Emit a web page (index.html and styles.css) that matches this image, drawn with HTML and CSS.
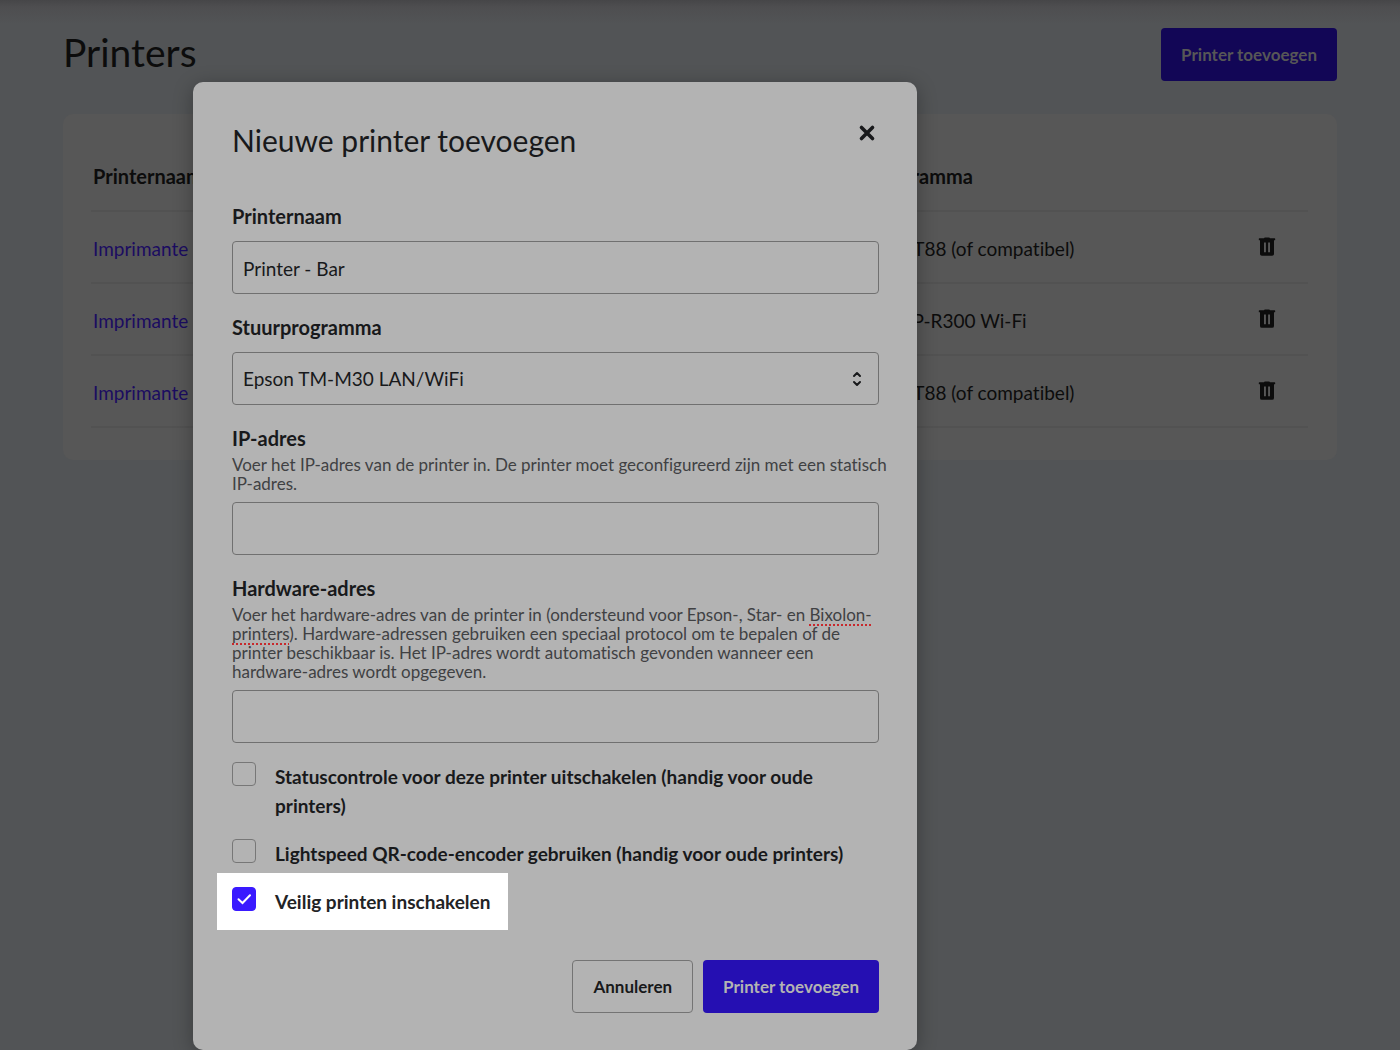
FILE: index.html
```html
<!DOCTYPE html>
<html lang="nl">
<head>
<meta charset="utf-8">
<meta name="viewport" content="width=device-width, initial-scale=1">
<title>Printers</title>
<link rel="stylesheet" href="styles.css">
</head>
<body>
<svg class="sprite" aria-hidden="true">
  <symbol id="trash" viewBox="0 0 18 20">
    <path fill="currentColor" fill-rule="evenodd" d="M6 1.2Q6.2.5 7 .5h4q.8 0 1 .7h4.600q.6 0 .6.7v.8q0 .6-.6.6H16v13.600q0 1.900-1.900 1.900H3.900Q2 18.800 2 16.900V3.300h-.6q-.6 0-.6-.6v-.8q0-.7.6-.7zM6 5.500v9.800h1.900V5.500zm4.100 0v9.800H12V5.500z"/>
  </symbol>
</svg>
<main class="page">
  <header class="page-header">
    <h1 class="page-title">Printers</h1>
    <button class="button button-dimmed" type="button">Printer toevoegen</button>
  </header>
  <section class="card">
    <table class="printers">
      <thead>
        <tr><th class="col-name" scope="col">Printernaam</th><th scope="col">Stuurprogramma</th><th class="col-action"></th></tr>
      </thead>
      <tbody>
        <tr><td><a class="printer-link" href="#">Imprimante</a></td><td>Epson TM-T88 (of compatibel)</td><td><button class="icon-button" type="button" aria-label="Verwijderen"><svg class="trash-icon"><use href="#trash"/></svg></button></td></tr>
        <tr><td><a class="printer-link" href="#">Imprimante</a></td><td>Bixolon SRP-R300 Wi-Fi</td><td><button class="icon-button" type="button" aria-label="Verwijderen"><svg class="trash-icon"><use href="#trash"/></svg></button></td></tr>
        <tr><td><a class="printer-link" href="#">Imprimante</a></td><td>Epson TM-T88 (of compatibel)</td><td><button class="icon-button" type="button" aria-label="Verwijderen"><svg class="trash-icon"><use href="#trash"/></svg></button></td></tr>
      </tbody>
    </table>
  </section>
</main>
<div class="overlay">
  <form class="modal" role="dialog" aria-labelledby="modal-title">
    <header class="modal-header">
      <h2 class="modal-title" id="modal-title">Nieuwe printer toevoegen</h2>
      <button class="icon-button close" type="button" aria-label="Sluiten">
        <svg width="24" height="24" viewBox="0 0 24 24"><path d="M6.500 6.500l11 11m0-11l-11 11" stroke="currentColor" stroke-width="3.600" stroke-linecap="round"/></svg>
      </button>
    </header>
    <div class="field">
      <label class="label" for="name">Printernaam</label>
      <input class="control" id="name" type="text" value="Printer - Bar">
    </div>
    <div class="field">
      <label class="label" for="driver">Stuurprogramma</label>
      <div class="select">
        <select class="control" id="driver"><option>Epson TM-M30 LAN/WiFi</option></select>
        <svg class="select-icon" width="10" height="16" viewBox="0 0 10 16"><path d="M2 5l3-3 3 3M2 11l3 3 3-3" fill="none" stroke="currentColor" stroke-width="2" stroke-linecap="round" stroke-linejoin="round"/></svg>
      </div>
    </div>
    <div class="field">
      <label class="label" for="ip">IP-adres</label>
      <p class="hint" id="ip-hint">Voer het IP-adres van de printer in. De printer moet geconfigureerd zijn met een statisch IP-adres.</p>
      <input class="control" id="ip" type="text" aria-describedby="ip-hint">
    </div>
    <div class="field">
      <label class="label" for="hardware">Hardware-adres</label>
      <p class="hint" id="hardware-hint">Voer het hardware-adres van de printer in (ondersteund voor Epson-, Star- en <span class="misspelled">Bixolon-printers</span>). Hardware-adressen gebruiken een speciaal protocol om te bepalen of de printer beschikbaar is. Het IP-adres wordt automatisch gevonden wanneer een hardware-adres wordt opgegeven.</p>
      <input class="control" id="hardware" type="text" aria-describedby="hardware-hint">
    </div>
    <div class="checks">
      <label class="check"><input class="box" type="checkbox"><span>Statuscontrole voor deze printer uitschakelen (handig voor oude printers)</span></label>
      <label class="check"><input class="box" type="checkbox"><span>Lightspeed QR-code-encoder gebruiken (handig voor oude printers)</span></label>
      <label class="check highlighted">
        <span class="tick"><input class="box" type="checkbox" checked><svg class="tick-icon" width="24" height="24" viewBox="0 0 24 24"><path d="M6.500 12.300l4 3.700 7.500-7.800" fill="none" stroke="currentColor" stroke-width="2" stroke-linecap="round"/></svg></span>
        <span>Veilig printen inschakelen</span>
      </label>
    </div>
    <footer class="actions">
      <button class="button button-outline" type="button">Annuleren</button>
      <button class="button" type="submit">Printer toevoegen</button>
    </footer>
  </form>
</div>
</body>
</html>
```
FILE: styles.css
```css
* {
  box-sizing: border-box;
}

body {
  margin: 0;
  position: relative;
  background: #525456;
  color: #0c0c0c;
  font: 19px/24px Lato, "Liberation Sans", sans-serif;
  font-variant-ligatures: none;
}

h1, h2, p {
  margin: 0;
}

button, input, select {
  font: inherit;
  color: inherit;
}

.sprite {
  display: none;
}

.page {
  min-height: 100vh;
  padding: 28px 63px;
  background: linear-gradient(#464648, #4e4e50 7px, #525456 24px);
}

.page-header {
  display: flex;
  justify-content: space-between;
  align-items: flex-start;
  margin-bottom: 33px;
}

.page-title {
  font-size: 39px;
  line-height: 48px;
  font-weight: 400;
}

.button {
  height: 53px;
  padding: 0 20px;
  border: 0;
  border-radius: 4px;
  background: #250fb2;
  color: #b3b3b3;
  font-size: 17px;
  font-weight: 700;
}

.button-dimmed {
  background: #120656;
  color: #575757;
}

.button-outline {
  border: 1px solid #747474;
  background: transparent;
  color: #18191b;
}

.card {
  padding: 28px 29px 32px 28px;
  border-radius: 10px;
  background: #575757;
}

.printers {
  width: 100%;
  table-layout: fixed;
  border-collapse: separate;
  border-spacing: 0;
}

.printers th,
.printers td {
  padding: 4px 2px 0;
  text-align: left;
  vertical-align: middle;
  border-bottom: 2px solid #525252;
}

.printers th {
  height: 70px;
  padding-top: 0;
  font-size: 20px;
  font-weight: 700;
}

.printers td {
  height: 72px;
}

.printers .col-name {
  width: 60%;
}

.printers .col-action {
  width: 92px;
}

.printers td:last-child {
  text-align: center;
  padding-left: 12px;
}

.printer-link {
  color: #1b0c61;
  text-decoration: none;
}

.icon-button {
  display: inline-flex;
  padding: 0;
  border: 0;
  background: transparent;
}

.trash-icon {
  width: 18px;
  height: 20px;
}

.overlay {
  position: absolute;
  inset: 0;
  padding: 82px 193px 0;
}

.modal {
  max-width: 724px;
  padding: 39px 38px 37px 39px;
  border-radius: 10px;
  background: #b3b3b3;
  color: #18191b;
  box-shadow: 0 4px 20px rgba(0, 0, 0, 0.3);
}

.modal-header {
  display: flex;
  justify-content: space-between;
  align-items: flex-start;
  margin-bottom: 45px;
}

.modal-title {
  font-size: 30px;
  line-height: 39px;
  font-weight: 400;
}

.field {
  display: flex;
  flex-direction: column;
  margin-bottom: 22px;
}

.field:has(+ .checks) {
  margin-bottom: 19px;
}

.label {
  margin-bottom: 14px;
  font-size: 20px;
  line-height: 22px;
  font-weight: 700;
}

.label:has(+ .hint) {
  margin-bottom: 6px;
}

.hint {
  margin-right: -10px;
  margin-bottom: 9px;
  color: #404143;
  font-size: 17px;
  line-height: 19px;
}

.misspelled {
  text-decoration: underline dotted #c8282c 2px;
  text-underline-offset: 3px;
  text-decoration-skip-ink: none;
}

.control {
  width: 100%;
  height: 53px;
  padding: 0 10px;
  border: 1px solid #707070;
  border-radius: 4px;
  background: transparent;
  appearance: none;
}

input.control {
  padding-top: 2px;
}

.select {
  display: grid;
  align-items: center;
}

.select > * {
  grid-area: 1 / 1;
}

.select-icon {
  justify-self: end;
  margin-right: 17px;
  pointer-events: none;
}

.checks {
  display: flex;
  flex-direction: column;
  align-items: flex-start;
  gap: 19px;
}

.check {
  display: flex;
  align-items: flex-start;
  gap: 19px;
  font-weight: 700;
  line-height: 29px;
}

.box {
  flex: none;
  width: 24px;
  height: 24px;
  margin: 0;
  border: 1px solid #777777;
  border-radius: 4px;
  appearance: none;
}

.box:checked {
  border-color: #3a1aff;
  background: #3a1aff;
}

.highlighted {
  margin: -14px -18px -14px -15px;
  padding: 14px 18px 14px 15px;
  background: #ffffff;
  color: #222325;
}

.tick {
  display: grid;
}

.tick > * {
  grid-area: 1 / 1;
}

.tick-icon {
  color: #ffffff;
  pointer-events: none;
}

.actions {
  display: flex;
  justify-content: flex-end;
  gap: 10px;
  margin-top: 44px;
}
```
